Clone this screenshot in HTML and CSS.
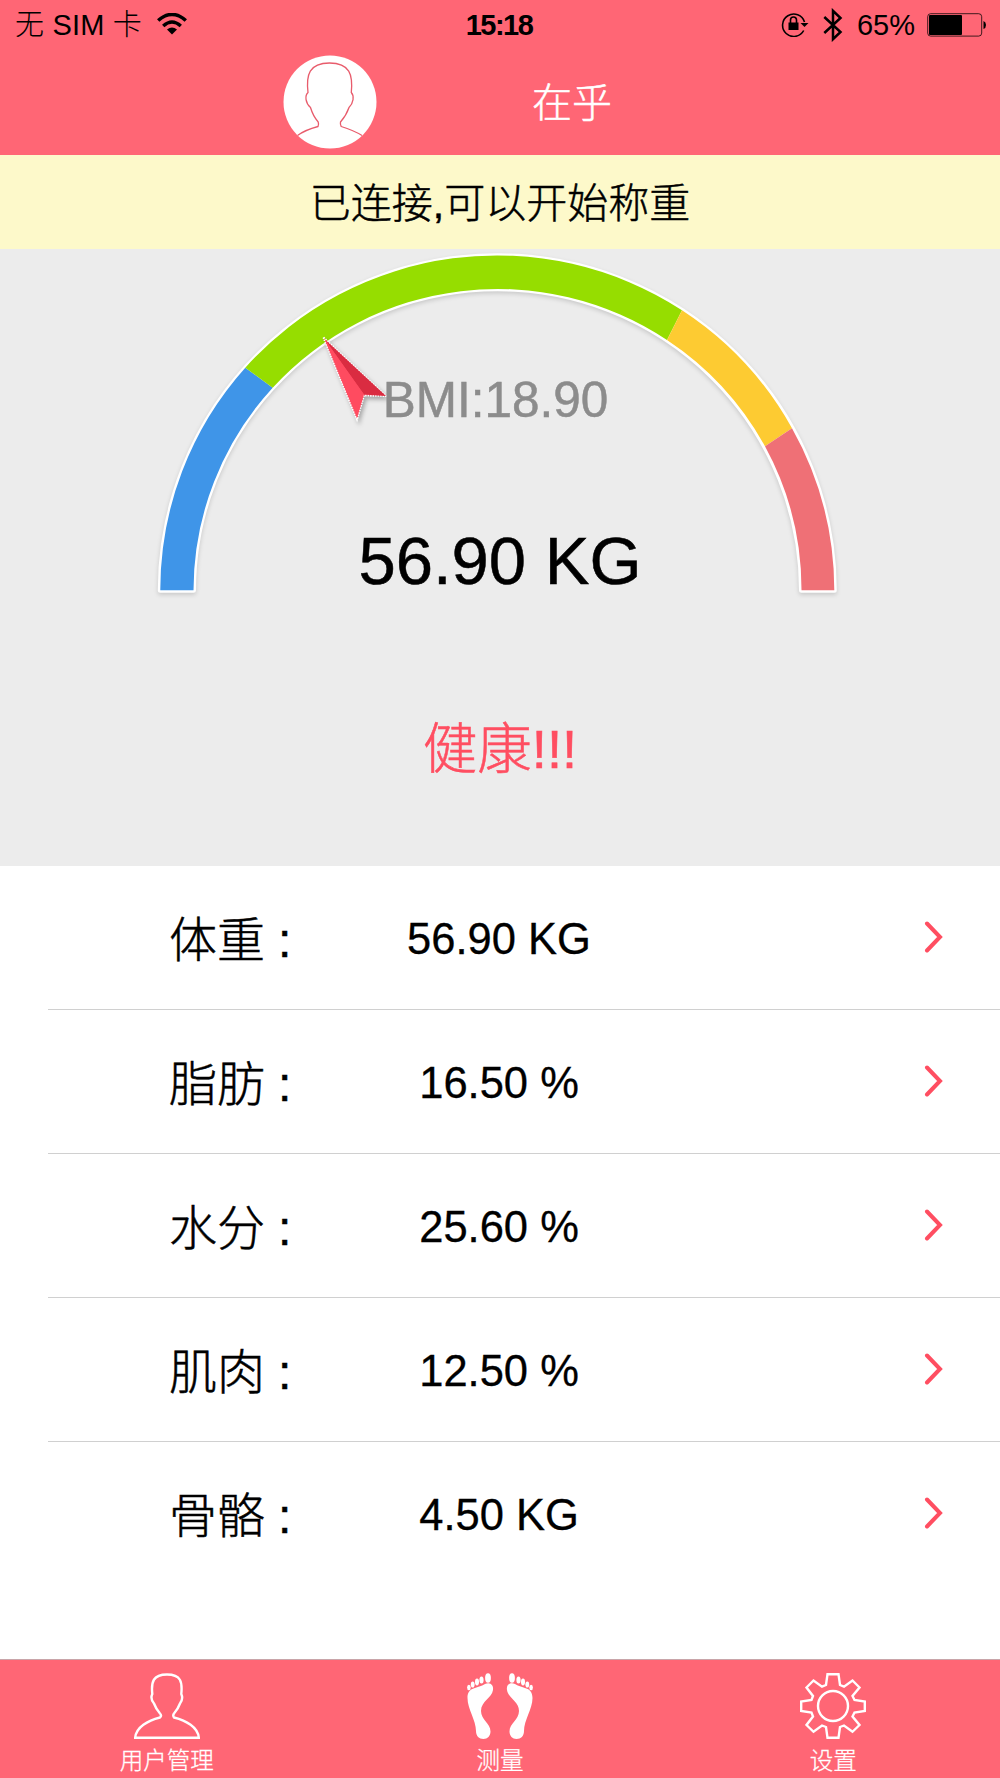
FILE: index.html
```html
<!DOCTYPE html>
<html lang="zh-CN">
<head>
  <meta charset="UTF-8" />
  <meta name="viewport" content="width=device-width, initial-scale=1" />
  <title>在乎</title>
  <link rel="stylesheet" href="styles.css">
</head>
<body>

  <!-- Header -->
  <header class="header">
    <div class="status-bar">
      <div class="status-left">
        <span>无 SIM 卡</span>
        <svg class="wifi" width="30" height="22" viewBox="0 0 30 22">
          <path d="M1.200 7.500 Q15 -4.500 28.800 7.500" fill="none" stroke="#000" stroke-width="3.600"/>
          <path d="M6.200 13 Q15 5 23.800 13" fill="none" stroke="#000" stroke-width="3.400"/>
          <path d="M10 16.500 Q15 12.500 20 16.500 L15 21.500 Z"/>
        </svg>
      </div>
      <div class="status-time">15:18</div>
      <div class="status-right">
        <svg class="lock" width="28" height="26" viewBox="0 0 28 26">
          <path d="M22.700 19.500 A11.200 11.200 0 1 1 23.500 11" fill="none" stroke="#000" stroke-width="1.600"/>
          <path d="M19.500 12 H27.500 L23.500 16 Z"/>
          <rect x="7.500" y="11.500" width="10" height="7.500"/>
          <path d="M9.500 12 V9 A3 3 0 0 1 15.500 9 V12" fill="none" stroke="#000" stroke-width="1.600"/>
        </svg>
        <svg class="bluetooth" width="20" height="34" viewBox="0 0 20 34">
          <path d="M1.300 9 L17.500 24 L10 31.200 V2.800 L17.500 10 L1.300 25" fill="none" stroke="#000" stroke-width="2.500"/>
        </svg>
        <span>65%</span>
        <svg class="battery" width="60" height="24" viewBox="0 0 60 24">
          <rect x="0.700" y="0.700" width="54" height="22.400" rx="3" fill="none" stroke="#000" stroke-opacity="0.750"/>
          <rect x="2" y="2" width="33" height="20" rx="1"/>
          <path d="M56.500 8 Q59 9 59 12 T56.500 16 Z"/>
        </svg>
      </div>
    </div>
    <div class="title-bar">
      <svg class="avatar" width="94" height="94" viewBox="0 0 94 94">
        <circle cx="47" cy="47" r="46.500" fill="#fff"/>
        <path d="M14.500 80.500 Q22 75 35 71.500 Q36 69 35.200 67 Q30 61 27.500 52.500 C22.500 48 21.500 41 25 37.500 C23 20 26 8 46.500 8 C67 8 70 20 68.300 37.500 C71.500 41 70.500 48 66 52.500 Q63.500 60 57.500 67 Q57 69 58.200 71.500 Q71 75.500 79 80.500" fill="none" stroke="#e85c6c" stroke-width="1.300"/>
      </svg>
      <h1>在乎</h1>
    </div>
  </header>

  <div class="notice">已连接,可以开始称重</div>

  <!-- BMI gauge -->
  <section class="gauge">
    <svg class="dial" width="1000" height="617" viewBox="0 0 1000 617">
      <path class="dial-edge" d="M160.300 341.300 A337 334.500 0 0 1 834.300 341.300 H801.500 A304 301.500 0 0 0 193.500 341.300 Z"/>
      <path fill="#3f95e8" d="M160.300 341.300 A337 334.500 0 0 1 245.300 118.700 L272.700 138.700 A304 301.500 0 0 0 193.500 341.300 Z"/>
      <path fill="#96dd00" d="M245.300 118.700 A337 334.500 0 0 1 682 61.300 L667 91 A304 301.500 0 0 0 272.700 138.700 Z"/>
      <path fill="#fdcb32" d="M682 61.300 A337 334.500 0 0 1 792 179.300 L765 197.300 A304 301.500 0 0 0 667 91 Z"/>
      <path fill="#ef7076" d="M792 179.300 A337 334.500 0 0 1 834.300 341.300 H801.500 A304 301.500 0 0 0 765 197.300 Z"/>
      <g class="pointer">
        <path d="M323.500 88.500 L386 147 L364 146.500 L357 170.500 Z" fill="#ff4b60" stroke="#fff" stroke-width="2" stroke-dasharray="1.500 1"/>
        <path d="M324.500 90 L386 147 L364 145.500 Z" fill="#da2c41"/>
        <path d="M324.500 90 L364 145.500 L357 169 Z" fill="#ff4b60"/>
      </g>
    </svg>
    <div class="bmi">BMI:18.90</div>
    <div class="weight">56.90 KG</div>
    <div class="result">健康!!!</div>
  </section>

  <!-- Measurements -->
  <ul class="list">
    <li>
      <span class="label">体重<i>:</i></span><span class="value">56.90 KG</span>
      <svg class="arrow" width="20" height="32" viewBox="0 0 20 32"><path d="M3 2.500 L16 16 L3 29.500"/></svg>
    </li>
    <li>
      <span class="label">脂肪<i>:</i></span><span class="value">16.50 %</span>
      <svg class="arrow" width="20" height="32" viewBox="0 0 20 32"><path d="M3 2.500 L16 16 L3 29.500"/></svg>
    </li>
    <li>
      <span class="label">水分<i>:</i></span><span class="value">25.60 %</span>
      <svg class="arrow" width="20" height="32" viewBox="0 0 20 32"><path d="M3 2.500 L16 16 L3 29.500"/></svg>
    </li>
    <li>
      <span class="label">肌肉<i>:</i></span><span class="value">12.50 %</span>
      <svg class="arrow" width="20" height="32" viewBox="0 0 20 32"><path d="M3 2.500 L16 16 L3 29.500"/></svg>
    </li>
    <li>
      <span class="label">骨骼<i>:</i></span><span class="value">4.50 KG</span>
      <svg class="arrow" width="20" height="32" viewBox="0 0 20 32"><path d="M3 2.500 L16 16 L3 29.500"/></svg>
    </li>
  </ul>

  <!-- Tab bar -->
  <nav class="tabs">
    <div class="tab">
      <svg width="66" height="66" viewBox="0 0 66 66" fill="none" stroke="#fff" stroke-width="2.400">
        <path d="M1.200 64.700 C2 54 14 47.500 26 44.500 Q28 42.500 26 40.500 Q22 36 20 30.500 Q16 26 18.300 21 C17 9 19 1.500 33 1.500 C47 1.500 48.500 9 47.300 21 Q49.500 26 46 30.500 Q44 36 40 40.500 Q38.500 42.500 40 44.500 C52 47.500 64 54 64.800 64.700 Z"/>
      </svg>
      <span>用户管理</span>
    </div>
    <div class="tab">
      <svg width="66" height="66" viewBox="0 0 66 66" fill="#fff">
        <g id="foot">
          <path d="M0.500 25 C0.500 13 11 16 18 11 C23 8.500 27 12 26 17 C25 25 14 28 14 38 C14 47 23.500 50 23.500 58.500 C23.500 63 20.500 66 16.500 66 C12 66 9 63 9 58 C9 47 0.500 36 0.500 25 Z"/>
          <ellipse cx="21" cy="5" rx="2.900" ry="4.800"/>
          <ellipse cx="14.500" cy="7" rx="2.100" ry="3.500"/>
          <ellipse cx="10" cy="9" rx="2" ry="3.400"/>
          <ellipse cx="5.700" cy="11.500" rx="1.900" ry="3.100"/>
          <ellipse cx="1.900" cy="14.500" rx="1.800" ry="2.800"/>
        </g>
        <use href="#foot" transform="translate(66 0) scale(-1 1)"/>
      </svg>
      <span>测量</span>
    </div>
    <div class="tab">
      <svg width="66" height="66" viewBox="0 0 66 66" fill="none" stroke="#fff" stroke-width="2.400">
        <path d="M27.500 1.200 H38.500 L40 12 L44 13.700 L52.500 7.500 L59.500 14.500 L52.500 23 L54.500 27 L64.800 28.500 V38 L54.500 39.500 L52.500 43.500 L59.500 52 L52.500 58.800 L44 52.500 L40 54 L38.500 64.800 H27.500 L26 54 L22 52.500 L13.500 58.800 L6.500 52 L13 43.500 L11.500 39.500 L1.200 38 V28.500 L11.500 27 L13 23 L6.500 14.500 L13.500 7.500 L22 13.700 L26 12 Z"/>
        <circle cx="33" cy="33" r="15"/>
      </svg>
      <span>设置</span>
    </div>
  </nav>

</body>
</html>
```

FILE: styles.css
```css
* {
  box-sizing: border-box;
}

body {
  margin: 0;
  width: 1000px;
  height: 1778px;
  display: flex;
  flex-direction: column;
  font-family: "Liberation Sans", "Noto Sans CJK SC", sans-serif;
  font-weight: 300;
  color: #000;
  background-color: #fff;
}

svg {
  display: block;
  flex-shrink: 0;
}

/* Header */
.header {
  height: 155px;
  background-color: #ff6675;
}

.status-bar {
  height: 51px;
  display: grid;
  grid-template-columns: 1fr auto 1fr;
  align-items: center;
  padding: 0 13px 0 15px;
  font-size: 29px;
  line-height: 51px;
}

.status-left,
.status-right {
  display: flex;
  align-items: center;
}

.status-left {
  gap: 15px;
}

.status-left span {
  letter-spacing: 0.2px;
}

.wifi {
  margin-top: -4px;
}

.status-time {
  font-size: 29px;
  font-weight: bold;
  letter-spacing: -1.5px;
  margin-right: 4px;
}

.status-right {
  justify-content: flex-end;
}

.lock {
  margin-top: -3px;
}

.bluetooth {
  margin: -2px 14px 0 14px;
}

.battery {
  margin-top: -2px;
  margin-left: 12px;
}

.title-bar {
  height: 101px;
  display: flex;
  align-items: center;
  padding-left: 283px;
}

.title-bar h1 {
  margin: -4px 0 0 155px;
  font-size: 40px;
  font-weight: 300;
  color: #fff;
  -webkit-text-stroke: 0.5px #fff;
}

.notice {
  height: 94px;
  padding-top: 2px;
  line-height: 94px;
  text-align: center;
  font-size: 41px;
  background-color: #fdf9ca;
  -webkit-text-stroke: 0.5px #000;
}

/* Gauge */
.gauge {
  position: relative;
  height: 617px;
  padding-top: 121px;
  text-align: center;
  background-color: #ececec;
}

.dial {
  position: absolute;
  left: 0;
  top: 0;
}

.dial-edge {
  fill: #fff;
  stroke: #fff;
  stroke-width: 5px;
  stroke-linejoin: round;
  filter: drop-shadow(0 2px 2px rgba(0,0,0,0.15));
}

.pointer {
  filter: drop-shadow(2px 3px 2px rgba(0,0,0,0.3));
}

.bmi,
.weight,
.result {
  position: relative;
}

.bmi {
  font-size: 49.5px;
  line-height: 60px;
  margin-right: 9px;
  color: #8c8c8c;
  -webkit-text-stroke: 0.5px #8c8c8c;
}

.weight {
  margin-top: 91px;
  font-size: 67px;
  line-height: 80px;
  -webkit-text-stroke: 0.5px #000;
}

.result {
  margin-top: 109px;
  font-size: 54.5px;
  line-height: 80px;
  color: #ff4e61;
  -webkit-text-stroke: 0.5px #ff4e61;
}

/* Measurement rows */
.list {
  flex: 1;
  margin: 0;
  padding: 0 0 0 48px;
  list-style: none;
}

.list li {
  height: 144px;
  display: grid;
  grid-template-columns: 200px 260px 1fr;
  align-items: center;
  padding: 0 56px 0 121px;
  border-bottom: 1px solid #d0d0d0;
}

.list li:last-child {
  border-bottom: none;
}

.label {
  margin-top: -4px;
  font-size: 48px;
  -webkit-text-stroke: 0.5px #000;
}

.label i {
  font-style: normal;
  margin-left: 13px;
}

.value {
  padding-top: 3px;
  font-size: 43.5px;
  text-align: center;
  -webkit-text-stroke: 0.3px #000;
}

.arrow {
  justify-self: end;
  margin-top: -2px;
  fill: none;
  stroke: #ff4e61;
  stroke-width: 4px;
  stroke-linecap: round;
}

/* Tab bar */
.tabs {
  height: 119px;
  display: flex;
  border-top: 1px solid #c9a5a9;
  background-color: #ff6675;
}

.tab {
  flex: 1;
  display: flex;
  flex-direction: column;
  align-items: center;
  padding-top: 13px;
  font-size: 23.5px;
  line-height: 30px;
  color: #fff;
}

.tab span {
  margin-top: 7px;
  -webkit-text-stroke: 0.3px #fff;
}
```
